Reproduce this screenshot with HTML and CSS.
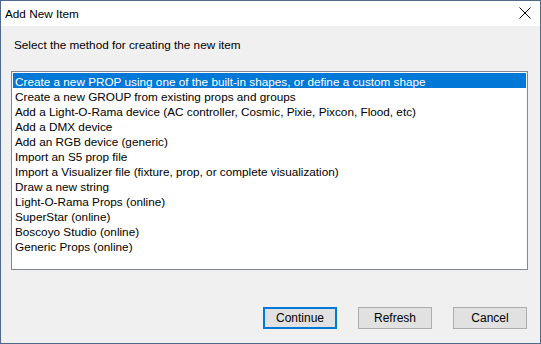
FILE: index.html
```html
<!DOCTYPE html>
<html>
<head>
<meta charset="utf-8">
<link rel="stylesheet" href="styles.css">
</head>
<body>
<div class="window">
  <div class="titlebar">
    <span class="title">Add New Item</span>
    <span class="close"><svg width="12" height="12" viewBox="0 0 12 12"><path d="M0.5 0.5 L11.5 11.5 M11.5 0.5 L0.5 11.5" stroke="#000" stroke-width="1" fill="none"/></svg></span>
  </div>
  <div class="content">
    <div class="label">Select the method for creating the new item</div>
    <div class="listbox">
      <div class="item selected">Create a new PROP using one of the built-in shapes, or define a custom shape</div>
      <div class="item">Create a new GROUP from existing props and groups</div>
      <div class="item">Add a Light-O-Rama device (AC controller, Cosmic, Pixie, Pixcon, Flood, etc)</div>
      <div class="item">Add a DMX device</div>
      <div class="item">Add an RGB device (generic)</div>
      <div class="item">Import an S5 prop file</div>
      <div class="item">Import a Visualizer file (fixture, prop, or complete visualization)</div>
      <div class="item">Draw a new string</div>
      <div class="item">Light-O-Rama Props (online)</div>
      <div class="item">SuperStar (online)</div>
      <div class="item">Boscoyo Studio (online)</div>
      <div class="item">Generic Props (online)</div>
    </div>
    <div class="buttons">
      <button class="btn default">Continue</button>
      <button class="btn">Refresh</button>
      <button class="btn">Cancel</button>
    </div>
  </div>
</div>
</body>
</html>
```
FILE: styles.css
```css
* { box-sizing: border-box; }
html, body { margin: 0; padding: 0; background: #f0f0f0; }
body { font-family: "Liberation Sans", Arial, sans-serif; font-size: 11.75px; color: #000; }
.window {
  width: 541px;
  height: 344px;
  border: 1px solid #4d6a8c;
  display: flex;
  flex-direction: column;
  background: #f0f0f0;
}
.titlebar {
  height: 25px;
  background: #fff;
  display: flex;
  align-items: center;
  justify-content: space-between;
  padding-left: 4px;
  padding-right: 9px;
  flex: none;
}
.title { font-size: 11.75px; line-height: 15px; }
.close { display: flex; width: 12px; height: 12px; margin-top: -1px; }
.content {
  flex: 1;
  padding: 10px 12px 0 10px;
  display: flex;
  flex-direction: column;
}
.label { line-height: 15px; padding-left: 3px; margin-top: 1px; }
.listbox {
  margin-top: 19px;
  height: 199px;
  border: 1px solid #828790;
  background: #fff;
  padding: 1px;
}
.item { line-height: 15px; height: 15px; padding-left: 2px; padding-top: 1px; white-space: nowrap; }
.item.selected { background: #0078d7; color: #fff; }
.buttons {
  margin-top: 37px;
  display: flex;
  justify-content: flex-end;
  gap: 21px;
  padding-right: 1px;
}
.btn {
  width: 74px;
  height: 22px;
  font-family: inherit;
  font-size: 12px;
  background: #e1e1e1;
  border: 1px solid #adadad;
  padding: 0;
  color: #000;
  line-height: 20px;
}
.btn.default { border: 2px solid #0078d7; line-height: 18px; }
```
